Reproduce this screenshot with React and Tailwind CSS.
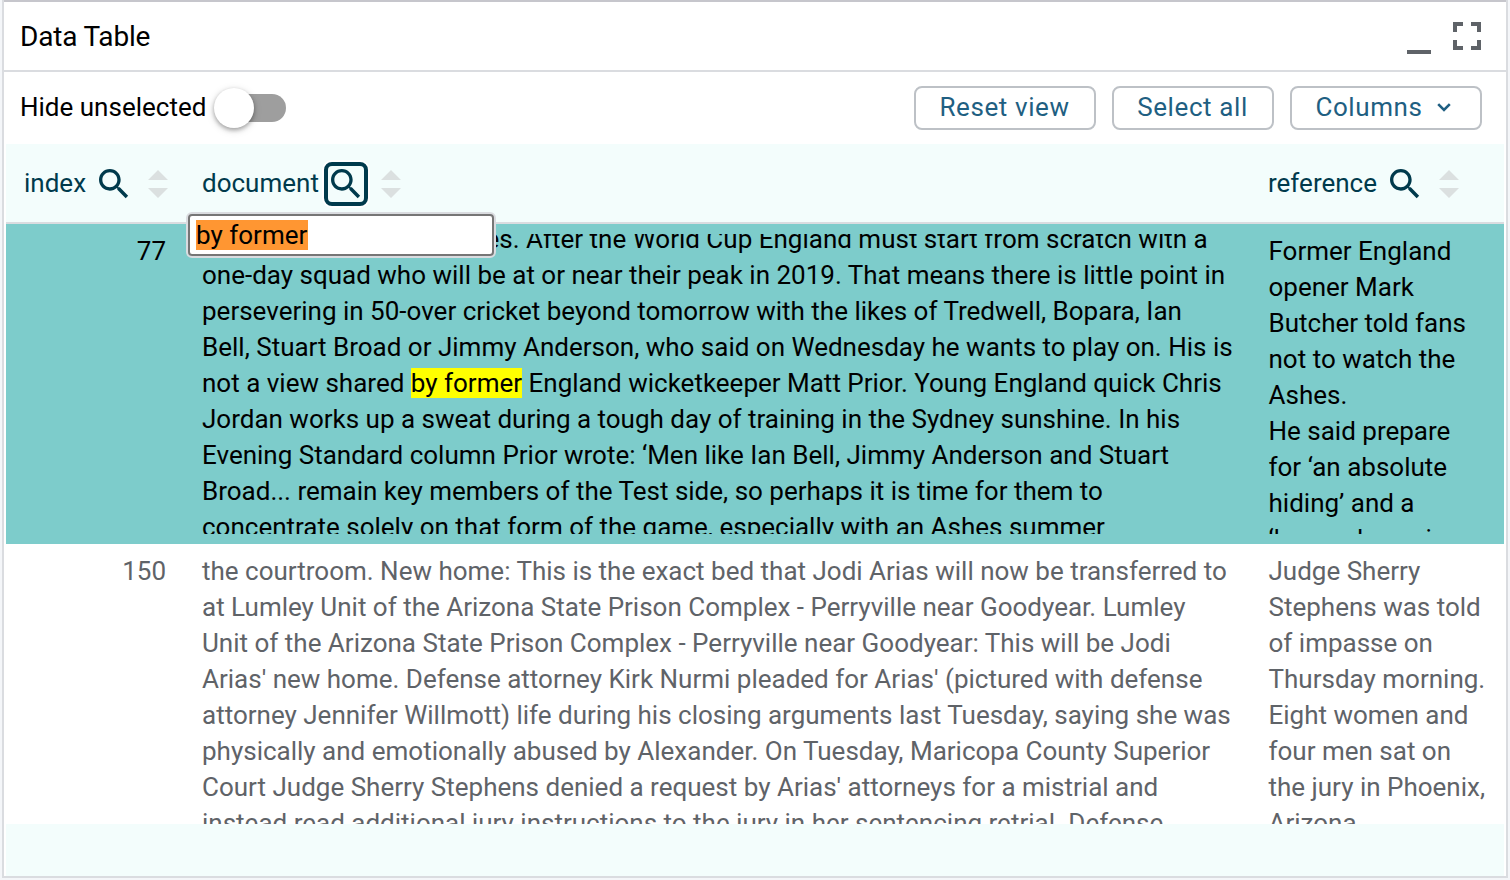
const SearchIcon = () => (
  <svg viewBox="0 0 24 24" className="block size-10 shrink-0" fill="currentColor">
    <path d="M15.5 14h-.79l-.28-.27C15.41 12.59 16 11.11 16 9.5 16 5.91 13.09 3 9.5 3S3 5.91 3 9.5 5.91 16 9.5 16c1.61 0 3.09-.59 4.23-1.57l.27.28v.79l5 4.99L20.49 19l-4.99-5zm-6 0C7.01 14 5 11.99 5 9.5S7.01 5 9.5 5 14 7.01 14 9.5 11.99 14 9.5 14z" />
  </svg>
);

const SortIcon = () => (
  <svg viewBox="0 0 20 28" className="block h-7 w-5 shrink-0" fill="#dbe0e0">
    <path d="M0 10 10 0 20 10zM0 18h20L10 28z" />
  </svg>
);

const HeaderCell = ({ label, className }) => (
  <div className={`flex items-center ${className}`}>
    <span>{label}</span>
    <span className="mt-0.5 ml-2">
      <SearchIcon />
    </span>
    <span className="mt-0.5 ml-3.5">
      <SortIcon />
    </span>
  </div>
);

const Lines = ({ lines }) =>
  lines.map((line, i) => (
    <div key={i} className="h-9 whitespace-pre">
      {line}
    </div>
  ));

const rows = [
  {
    index: 77,
    document: [
      <span className="ml-[283.5px]">es. After the World Cup England must start from scratch with a</span>,
      'one-day squad who will be at or near their peak in 2019. That means there is little point in',
      'persevering in 50-over cricket beyond tomorrow with the likes of Tredwell, Bopara, Ian',
      'Bell, Stuart Broad or Jimmy Anderson, who said on Wednesday he wants to play on. His is',
      <>
        not a view shared <mark className="bg-[#ffff00] text-black">by former</mark> England wicketkeeper Matt Prior. Young England quick Chris
      </>,
      'Jordan works up a sweat during a tough day of training in the Sydney sunshine. In his',
      'Evening Standard column Prior wrote: ‘Men like Ian Bell, Jimmy Anderson and Stuart',
      'Broad... remain key members of the Test side, so perhaps it is time for them to',
      'concentrate solely on that form of the game, especially with an Ashes summer',
    ],
    reference: [
      'Former England',
      'opener Mark',
      'Butcher told fans',
      'not to watch the',
      'Ashes.',
      'He said prepare',
      'for ‘an absolute',
      'hiding’ and a',
      '‘horrendous six',
    ],
  },
  {
    index: 150,
    document: [
      'the courtroom. New home: This is the exact bed that Jodi Arias will now be transferred to',
      'at Lumley Unit of the Arizona State Prison Complex - Perryville near Goodyear. Lumley',
      'Unit of the Arizona State Prison Complex - Perryville near Goodyear: This will be Jodi',
      "Arias' new home. Defense attorney Kirk Nurmi pleaded for Arias' (pictured with defense",
      'attorney Jennifer Willmott) life during his closing arguments last Tuesday, saying she was',
      'physically and emotionally abused by Alexander. On Tuesday, Maricopa County Superior',
      "Court Judge Sherry Stephens denied a request by Arias' attorneys for a mistrial and",
      'instead read additional jury instructions to the jury in her sentencing retrial. Defense',
    ],
    reference: [
      'Judge Sherry',
      'Stephens was told',
      'of impasse on',
      'Thursday morning.',
      'Eight women and',
      'four men sat on',
      'the jury in Phoenix,',
      'Arizona.',
    ],
  },
];

const buttonClass =
  'flex h-11 items-center justify-center rounded-lg border-2 border-[#bdc1c6] pb-0.5 text-[26px] tracking-[0.6px] text-[#1f5f82]';

export default function App() {
  return (
    <div className="h-[880px] w-[1510px] overflow-hidden bg-[#f4f6f9] pr-0.5 pl-0.5 font-['Roboto',sans-serif] text-[26px] leading-9 text-black">
      <div className="flex h-[878px] w-[1506px] flex-col border-x-2 border-b-2 border-[#dadce0] bg-white">
        <header className="flex h-[72px] shrink-0 items-center justify-between border-t-2 border-b-2 border-t-[#c6c6cc] border-b-[#dadce0] pr-6 pl-4">
          <h1 className="pt-0.5 text-[28px] tracking-[-0.2px]">Data Table</h1>
          <svg viewBox="0 0 76 36" className="block h-9 w-[76px]" fill="#5f6368">
            <path d="M1 32h24v4H1zM47 4h10v4h-6v6h-4zM65 4h10v10h-4v-6h-6zM47 22h4v6h6v4H47zM71 22h4v10H65v-4h6z" />
          </svg>
        </header>

        <div className="flex h-[72px] shrink-0 items-center pr-6 pl-4">
          <span className="pb-0.5">Hide unselected</span>
          <button className="ml-2 flex h-10 w-[72px] items-center" aria-label="Hide unselected">
            <span className="ml-0.5 flex h-7 w-[70px] items-center rounded-full bg-[#9e9e9e]">
              <span className="-ml-0.5 size-10 shrink-0 rounded-full bg-white shadow-[0_2px_4px_rgba(0,0,0,0.3),0_2px_8px_rgba(0,0,0,0.15)]" />
            </span>
          </button>
          <div className="ml-auto flex gap-4">
            <button className={`w-[182px] pr-px ${buttonClass}`}>Reset view</button>
            <button className={`w-[162px] pr-px ${buttonClass}`}>Select all</button>
            <button className={`w-48 pr-1.5 ${buttonClass}`}>
              Columns
              <svg viewBox="0 0 14 9" className="mt-px ml-3.5 block h-[9px] w-3.5" fill="none" stroke="currentColor" strokeWidth="2.6">
                <path d="m1.2 1.2 5.8 5.8 5.8-5.8" />
              </svg>
            </button>
          </div>
        </div>

        <main className="mx-0.5 flex h-[732px] flex-col bg-[#f3fdfc]">
          <div className="relative flex h-20 shrink-0 border-b-2 border-[#dadce0] text-[#003a4c]">
            <HeaderCell label="index" className="w-[178px] pl-[18px]" />
            <div className="flex w-[1066px] items-center pl-[18px]">
              <span>document</span>
              <span className="mt-0.5 ml-[5px] flex size-11 items-center justify-center rounded-lg border-4 border-current pl-px shadow-[0_0_0_2px_#ffffff]">
                <SearchIcon />
              </span>
              <span className="mt-0.5 ml-[13px]">
                <SortIcon />
              </span>
            </div>
            <HeaderCell label="reference" className="pl-[18px]" />
            <div className="absolute top-[68px] left-[180px] z-10 h-[46px] w-[310px] rounded-md border-2 border-[#dadce0] bg-[#dadce0]">
              <div className="flex h-[42px] items-center rounded border-2 border-[#767676] bg-white pl-1.5 text-black">
                <span className="h-[30px] w-28 bg-[#ff9632] leading-[30px]">by former</span>
              </div>
            </div>
          </div>

          {rows.map((row, i) => (
            <div
              key={row.index}
              className={
                i === 0
                  ? 'flex h-80 shrink-0 bg-[#7dcccb] py-2.5 text-black'
                  : 'flex h-[280px] shrink-0 bg-white pt-2.5 text-[#5f6368]'
              }
            >
              <div className="-mt-px w-[178px] pr-[18px] text-right">{row.index}</div>
              <div className="w-[1066px] overflow-hidden pl-[18px]">
                <div className={i === 0 ? '-mt-[13px]' : '-mt-px'}>
                  <Lines lines={row.document} />
                </div>
              </div>
              <div className="w-[254px] overflow-hidden pl-[18.5px]">
                <div className="-mt-px">
                  <Lines lines={row.reference} />
                </div>
              </div>
            </div>
          ))}
        </main>
      </div>
    </div>
  );
}
